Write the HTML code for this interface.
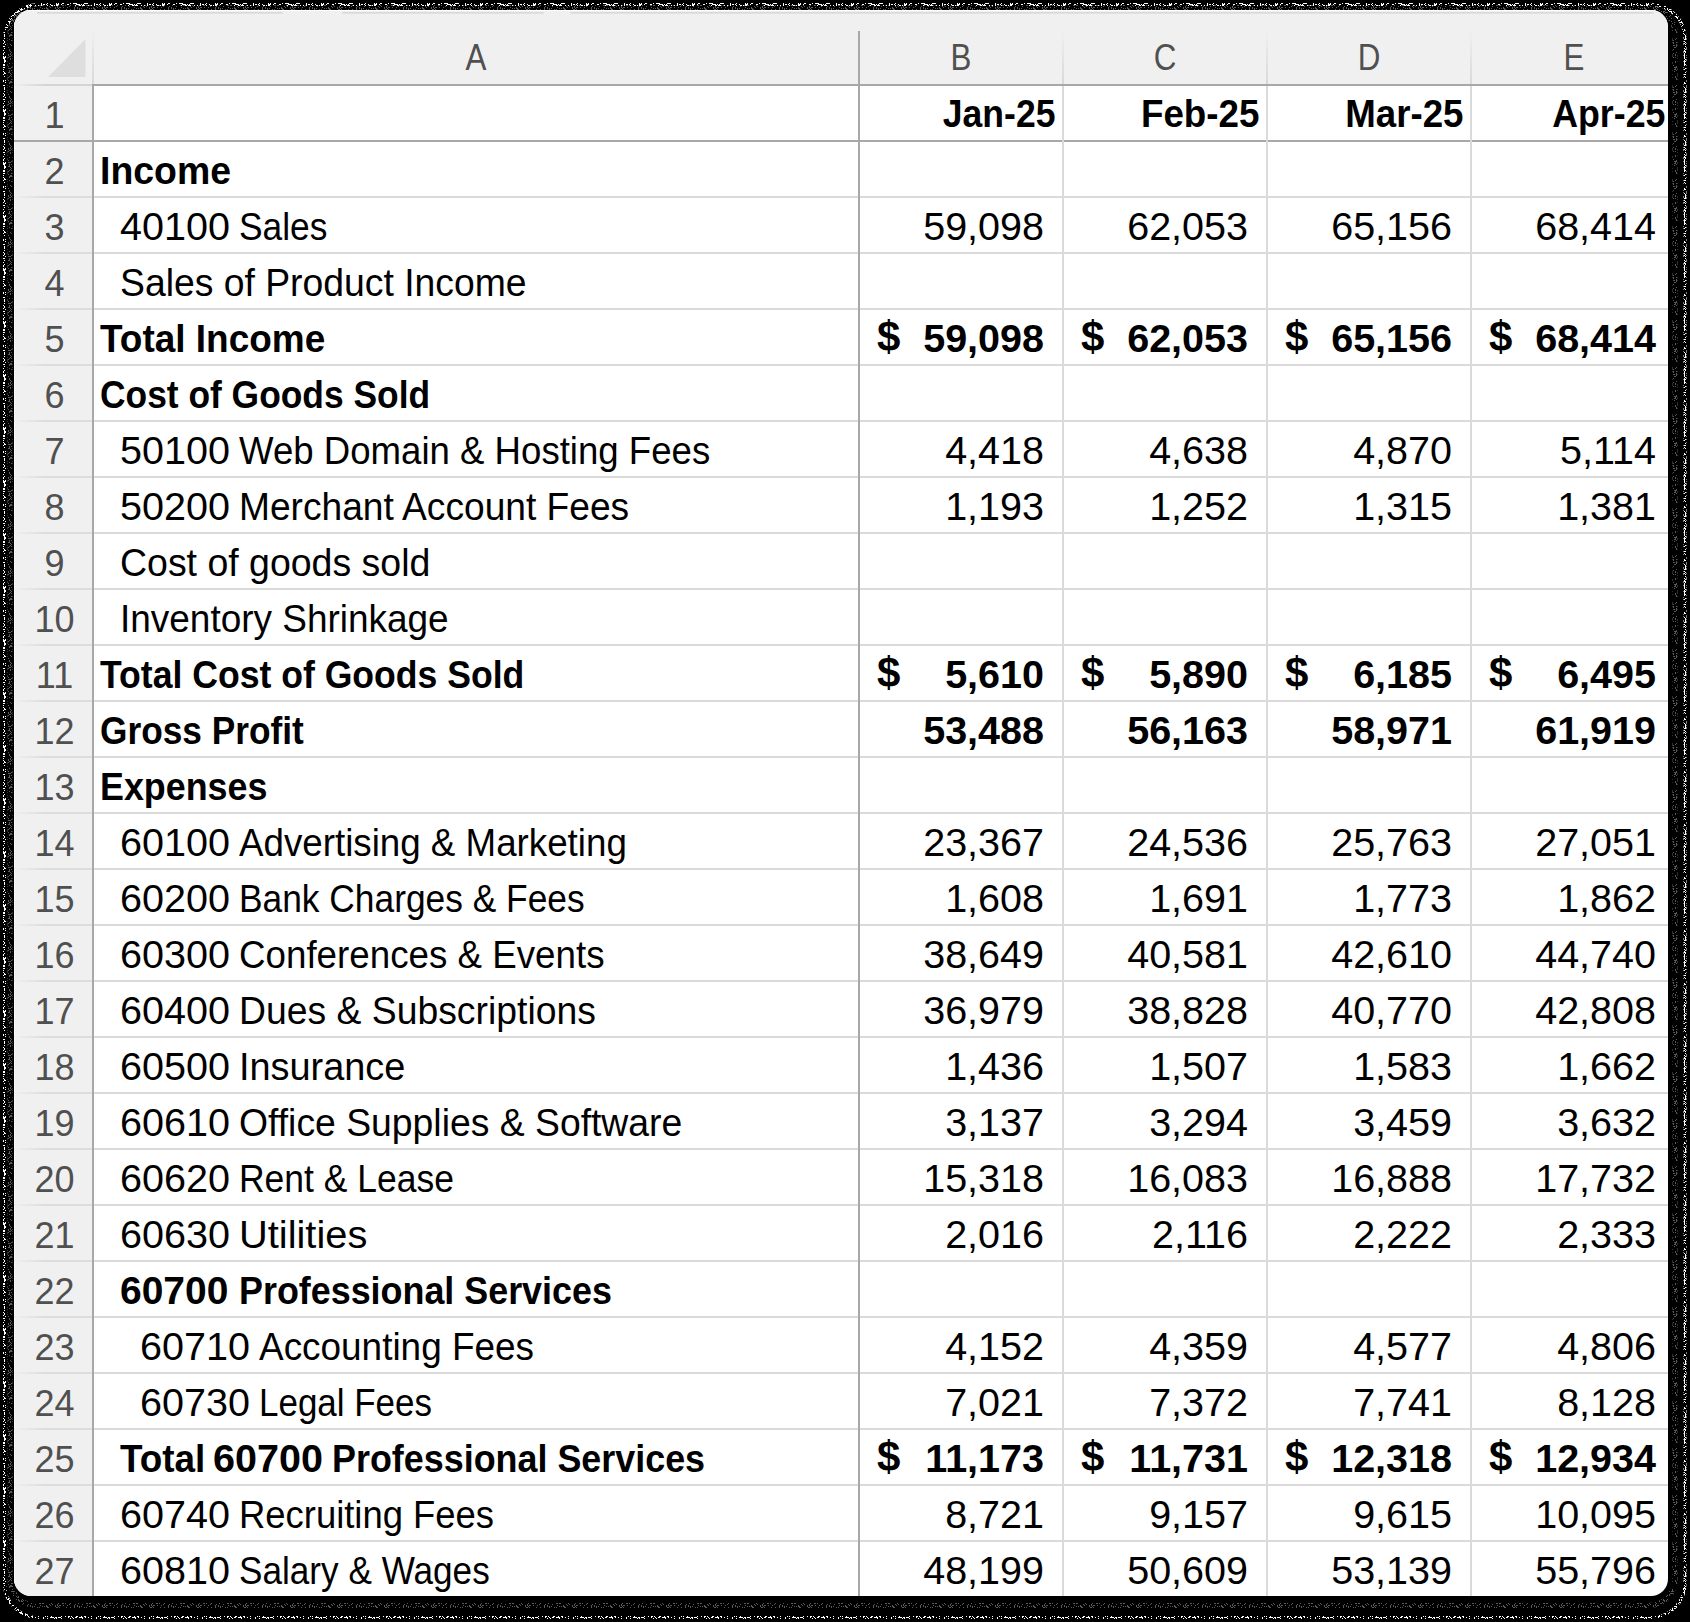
<!DOCTYPE html>
<html><head><meta charset="utf-8"><style>
html,body{margin:0;padding:0;}
body{width:1690px;height:1622px;background:#000;overflow:hidden;position:relative;font-family:"Liberation Sans",sans-serif;}
.card{position:absolute;left:14px;top:10px;width:1654px;height:1586px;border-radius:17px;overflow:hidden;background:#fff;}
.a{position:absolute;white-space:nowrap;}
.hl{position:absolute;height:2px;}
.vl{position:absolute;width:2px;}
.t{position:absolute;white-space:nowrap;height:56px;line-height:56px;font-size:38px;color:#000;}
.lr{transform:scaleX(0.983);transform-origin:0 0;}
.lb{transform:scaleX(0.933);transform-origin:0 0;}
.hd{transform:scaleX(0.935);transform-origin:100% 0;}
.n{font-size:39.5px;}
.b{font-weight:bold;}
.rn{position:absolute;white-space:nowrap;height:56px;line-height:56px;font-size:36px;color:#505050;text-align:center;width:78px;left:1.5px;margin-top:2px;}
.ch{position:absolute;white-space:nowrap;top:10.5px;height:74px;line-height:74px;font-size:36px;color:#505050;text-align:center;}
</style></head><body><svg style="position:absolute;left:0;top:0" width="1690" height="1622"><defs><pattern id="nz" width="53" height="53" patternUnits="userSpaceOnUse"><path d="M0 0h1v1h-1zM1 0h1v1h-1zM3 0h1v1h-1zM6 0h1v1h-1zM8 0h1v1h-1zM10 0h1v1h-1zM11 0h1v1h-1zM14 0h1v1h-1zM15 0h1v1h-1zM21 0h1v1h-1zM23 0h1v1h-1zM24 0h1v1h-1zM25 0h1v1h-1zM26 0h1v1h-1zM28 0h1v1h-1zM33 0h1v1h-1zM34 0h1v1h-1zM35 0h1v1h-1zM38 0h1v1h-1zM41 0h1v1h-1zM44 0h1v1h-1zM49 0h1v1h-1zM51 0h1v1h-1zM1 1h1v1h-1zM3 1h1v1h-1zM8 1h1v1h-1zM17 1h1v1h-1zM22 1h1v1h-1zM25 1h1v1h-1zM27 1h1v1h-1zM28 1h1v1h-1zM29 1h1v1h-1zM31 1h1v1h-1zM32 1h1v1h-1zM35 1h1v1h-1zM41 1h1v1h-1zM46 1h1v1h-1zM47 1h1v1h-1zM48 1h1v1h-1zM49 1h1v1h-1zM52 1h1v1h-1zM0 2h1v1h-1zM9 2h1v1h-1zM16 2h1v1h-1zM18 2h1v1h-1zM19 2h1v1h-1zM20 2h1v1h-1zM21 2h1v1h-1zM23 2h1v1h-1zM24 2h1v1h-1zM25 2h1v1h-1zM26 2h1v1h-1zM28 2h1v1h-1zM31 2h1v1h-1zM32 2h1v1h-1zM35 2h1v1h-1zM40 2h1v1h-1zM41 2h1v1h-1zM43 2h1v1h-1zM45 2h1v1h-1zM46 2h1v1h-1zM49 2h1v1h-1zM51 2h1v1h-1zM3 3h1v1h-1zM5 3h1v1h-1zM9 3h1v1h-1zM10 3h1v1h-1zM17 3h1v1h-1zM20 3h1v1h-1zM21 3h1v1h-1zM22 3h1v1h-1zM23 3h1v1h-1zM31 3h1v1h-1zM32 3h1v1h-1zM33 3h1v1h-1zM34 3h1v1h-1zM41 3h1v1h-1zM47 3h1v1h-1zM3 4h1v1h-1zM4 4h1v1h-1zM5 4h1v1h-1zM8 4h1v1h-1zM14 4h1v1h-1zM15 4h1v1h-1zM23 4h1v1h-1zM24 4h1v1h-1zM25 4h1v1h-1zM26 4h1v1h-1zM28 4h1v1h-1zM30 4h1v1h-1zM41 4h1v1h-1zM43 4h1v1h-1zM44 4h1v1h-1zM46 4h1v1h-1zM50 4h1v1h-1zM1 5h1v1h-1zM3 5h1v1h-1zM4 5h1v1h-1zM22 5h1v1h-1zM26 5h1v1h-1zM27 5h1v1h-1zM29 5h1v1h-1zM30 5h1v1h-1zM31 5h1v1h-1zM35 5h1v1h-1zM38 5h1v1h-1zM41 5h1v1h-1zM47 5h1v1h-1zM51 5h1v1h-1zM52 5h1v1h-1zM1 6h1v1h-1zM4 6h1v1h-1zM8 6h1v1h-1zM12 6h1v1h-1zM13 6h1v1h-1zM14 6h1v1h-1zM16 6h1v1h-1zM17 6h1v1h-1zM21 6h1v1h-1zM22 6h1v1h-1zM26 6h1v1h-1zM27 6h1v1h-1zM30 6h1v1h-1zM34 6h1v1h-1zM36 6h1v1h-1zM42 6h1v1h-1zM43 6h1v1h-1zM45 6h1v1h-1zM46 6h1v1h-1zM47 6h1v1h-1zM48 6h1v1h-1zM49 6h1v1h-1zM50 6h1v1h-1zM51 6h1v1h-1zM0 7h1v1h-1zM2 7h1v1h-1zM4 7h1v1h-1zM5 7h1v1h-1zM6 7h1v1h-1zM9 7h1v1h-1zM12 7h1v1h-1zM27 7h1v1h-1zM28 7h1v1h-1zM29 7h1v1h-1zM31 7h1v1h-1zM32 7h1v1h-1zM33 7h1v1h-1zM37 7h1v1h-1zM38 7h1v1h-1zM39 7h1v1h-1zM41 7h1v1h-1zM43 7h1v1h-1zM47 7h1v1h-1zM49 7h1v1h-1zM51 7h1v1h-1zM2 8h1v1h-1zM4 8h1v1h-1zM5 8h1v1h-1zM6 8h1v1h-1zM8 8h1v1h-1zM9 8h1v1h-1zM10 8h1v1h-1zM11 8h1v1h-1zM19 8h1v1h-1zM21 8h1v1h-1zM24 8h1v1h-1zM30 8h1v1h-1zM40 8h1v1h-1zM41 8h1v1h-1zM42 8h1v1h-1zM44 8h1v1h-1zM51 8h1v1h-1zM4 9h1v1h-1zM6 9h1v1h-1zM7 9h1v1h-1zM8 9h1v1h-1zM10 9h1v1h-1zM20 9h1v1h-1zM21 9h1v1h-1zM22 9h1v1h-1zM24 9h1v1h-1zM26 9h1v1h-1zM27 9h1v1h-1zM28 9h1v1h-1zM32 9h1v1h-1zM36 9h1v1h-1zM38 9h1v1h-1zM41 9h1v1h-1zM46 9h1v1h-1zM47 9h1v1h-1zM49 9h1v1h-1zM51 9h1v1h-1zM1 10h1v1h-1zM6 10h1v1h-1zM9 10h1v1h-1zM10 10h1v1h-1zM13 10h1v1h-1zM14 10h1v1h-1zM16 10h1v1h-1zM18 10h1v1h-1zM21 10h1v1h-1zM25 10h1v1h-1zM32 10h1v1h-1zM33 10h1v1h-1zM34 10h1v1h-1zM36 10h1v1h-1zM38 10h1v1h-1zM39 10h1v1h-1zM41 10h1v1h-1zM51 10h1v1h-1zM3 11h1v1h-1zM4 11h1v1h-1zM6 11h1v1h-1zM9 11h1v1h-1zM12 11h1v1h-1zM14 11h1v1h-1zM17 11h1v1h-1zM18 11h1v1h-1zM19 11h1v1h-1zM22 11h1v1h-1zM26 11h1v1h-1zM27 11h1v1h-1zM28 11h1v1h-1zM30 11h1v1h-1zM31 11h1v1h-1zM32 11h1v1h-1zM41 11h1v1h-1zM42 11h1v1h-1zM44 11h1v1h-1zM48 11h1v1h-1zM49 11h1v1h-1zM50 11h1v1h-1zM3 12h1v1h-1zM4 12h1v1h-1zM9 12h1v1h-1zM15 12h1v1h-1zM16 12h1v1h-1zM17 12h1v1h-1zM26 12h1v1h-1zM28 12h1v1h-1zM31 12h1v1h-1zM32 12h1v1h-1zM33 12h1v1h-1zM36 12h1v1h-1zM37 12h1v1h-1zM41 12h1v1h-1zM43 12h1v1h-1zM44 12h1v1h-1zM50 12h1v1h-1zM51 12h1v1h-1zM1 13h1v1h-1zM2 13h1v1h-1zM6 13h1v1h-1zM9 13h1v1h-1zM10 13h1v1h-1zM14 13h1v1h-1zM18 13h1v1h-1zM20 13h1v1h-1zM22 13h1v1h-1zM23 13h1v1h-1zM25 13h1v1h-1zM28 13h1v1h-1zM29 13h1v1h-1zM33 13h1v1h-1zM35 13h1v1h-1zM37 13h1v1h-1zM38 13h1v1h-1zM39 13h1v1h-1zM46 13h1v1h-1zM47 13h1v1h-1zM50 13h1v1h-1zM2 14h1v1h-1zM3 14h1v1h-1zM4 14h1v1h-1zM7 14h1v1h-1zM9 14h1v1h-1zM14 14h1v1h-1zM18 14h1v1h-1zM21 14h1v1h-1zM25 14h1v1h-1zM26 14h1v1h-1zM27 14h1v1h-1zM29 14h1v1h-1zM33 14h1v1h-1zM36 14h1v1h-1zM38 14h1v1h-1zM39 14h1v1h-1zM40 14h1v1h-1zM45 14h1v1h-1zM46 14h1v1h-1zM51 14h1v1h-1zM2 15h1v1h-1zM8 15h1v1h-1zM9 15h1v1h-1zM12 15h1v1h-1zM13 15h1v1h-1zM15 15h1v1h-1zM16 15h1v1h-1zM17 15h1v1h-1zM19 15h1v1h-1zM23 15h1v1h-1zM24 15h1v1h-1zM25 15h1v1h-1zM29 15h1v1h-1zM36 15h1v1h-1zM38 15h1v1h-1zM42 15h1v1h-1zM43 15h1v1h-1zM44 15h1v1h-1zM45 15h1v1h-1zM48 15h1v1h-1zM52 15h1v1h-1zM3 16h1v1h-1zM8 16h1v1h-1zM9 16h1v1h-1zM10 16h1v1h-1zM11 16h1v1h-1zM18 16h1v1h-1zM21 16h1v1h-1zM24 16h1v1h-1zM26 16h1v1h-1zM27 16h1v1h-1zM28 16h1v1h-1zM31 16h1v1h-1zM32 16h1v1h-1zM33 16h1v1h-1zM35 16h1v1h-1zM36 16h1v1h-1zM37 16h1v1h-1zM40 16h1v1h-1zM41 16h1v1h-1zM45 16h1v1h-1zM46 16h1v1h-1zM49 16h1v1h-1zM50 16h1v1h-1zM52 16h1v1h-1zM6 17h1v1h-1zM8 17h1v1h-1zM9 17h1v1h-1zM16 17h1v1h-1zM17 17h1v1h-1zM21 17h1v1h-1zM25 17h1v1h-1zM26 17h1v1h-1zM29 17h1v1h-1zM33 17h1v1h-1zM34 17h1v1h-1zM38 17h1v1h-1zM44 17h1v1h-1zM46 17h1v1h-1zM50 17h1v1h-1zM51 17h1v1h-1zM2 18h1v1h-1zM3 18h1v1h-1zM6 18h1v1h-1zM9 18h1v1h-1zM11 18h1v1h-1zM15 18h1v1h-1zM22 18h1v1h-1zM25 18h1v1h-1zM29 18h1v1h-1zM31 18h1v1h-1zM32 18h1v1h-1zM34 18h1v1h-1zM37 18h1v1h-1zM39 18h1v1h-1zM43 18h1v1h-1zM47 18h1v1h-1zM52 18h1v1h-1zM4 19h1v1h-1zM7 19h1v1h-1zM10 19h1v1h-1zM12 19h1v1h-1zM14 19h1v1h-1zM17 19h1v1h-1zM18 19h1v1h-1zM20 19h1v1h-1zM21 19h1v1h-1zM22 19h1v1h-1zM23 19h1v1h-1zM27 19h1v1h-1zM29 19h1v1h-1zM37 19h1v1h-1zM42 19h1v1h-1zM48 19h1v1h-1zM50 19h1v1h-1zM52 19h1v1h-1zM4 20h1v1h-1zM5 20h1v1h-1zM6 20h1v1h-1zM7 20h1v1h-1zM12 20h1v1h-1zM13 20h1v1h-1zM15 20h1v1h-1zM16 20h1v1h-1zM18 20h1v1h-1zM20 20h1v1h-1zM23 20h1v1h-1zM26 20h1v1h-1zM28 20h1v1h-1zM29 20h1v1h-1zM30 20h1v1h-1zM35 20h1v1h-1zM36 20h1v1h-1zM44 20h1v1h-1zM46 20h1v1h-1zM49 20h1v1h-1zM50 20h1v1h-1zM52 20h1v1h-1zM2 21h1v1h-1zM3 21h1v1h-1zM8 21h1v1h-1zM9 21h1v1h-1zM10 21h1v1h-1zM11 21h1v1h-1zM15 21h1v1h-1zM21 21h1v1h-1zM22 21h1v1h-1zM23 21h1v1h-1zM24 21h1v1h-1zM30 21h1v1h-1zM35 21h1v1h-1zM38 21h1v1h-1zM40 21h1v1h-1zM41 21h1v1h-1zM42 21h1v1h-1zM46 21h1v1h-1zM48 21h1v1h-1zM49 21h1v1h-1zM9 22h1v1h-1zM10 22h1v1h-1zM12 22h1v1h-1zM14 22h1v1h-1zM15 22h1v1h-1zM16 22h1v1h-1zM19 22h1v1h-1zM20 22h1v1h-1zM21 22h1v1h-1zM26 22h1v1h-1zM32 22h1v1h-1zM36 22h1v1h-1zM37 22h1v1h-1zM38 22h1v1h-1zM39 22h1v1h-1zM45 22h1v1h-1zM46 22h1v1h-1zM47 22h1v1h-1zM49 22h1v1h-1zM50 22h1v1h-1zM52 22h1v1h-1zM0 23h1v1h-1zM1 23h1v1h-1zM4 23h1v1h-1zM9 23h1v1h-1zM16 23h1v1h-1zM18 23h1v1h-1zM20 23h1v1h-1zM21 23h1v1h-1zM22 23h1v1h-1zM25 23h1v1h-1zM29 23h1v1h-1zM33 23h1v1h-1zM35 23h1v1h-1zM36 23h1v1h-1zM39 23h1v1h-1zM41 23h1v1h-1zM50 23h1v1h-1zM52 23h1v1h-1zM0 24h1v1h-1zM1 24h1v1h-1zM6 24h1v1h-1zM13 24h1v1h-1zM14 24h1v1h-1zM18 24h1v1h-1zM22 24h1v1h-1zM25 24h1v1h-1zM26 24h1v1h-1zM27 24h1v1h-1zM30 24h1v1h-1zM31 24h1v1h-1zM32 24h1v1h-1zM33 24h1v1h-1zM35 24h1v1h-1zM36 24h1v1h-1zM37 24h1v1h-1zM40 24h1v1h-1zM42 24h1v1h-1zM48 24h1v1h-1zM50 24h1v1h-1zM51 24h1v1h-1zM0 25h1v1h-1zM7 25h1v1h-1zM16 25h1v1h-1zM25 25h1v1h-1zM27 25h1v1h-1zM32 25h1v1h-1zM39 25h1v1h-1zM45 25h1v1h-1zM47 25h1v1h-1zM51 25h1v1h-1zM8 26h1v1h-1zM12 26h1v1h-1zM15 26h1v1h-1zM16 26h1v1h-1zM18 26h1v1h-1zM23 26h1v1h-1zM24 26h1v1h-1zM28 26h1v1h-1zM31 26h1v1h-1zM32 26h1v1h-1zM38 26h1v1h-1zM45 26h1v1h-1zM47 26h1v1h-1zM51 26h1v1h-1zM0 27h1v1h-1zM2 27h1v1h-1zM3 27h1v1h-1zM5 27h1v1h-1zM6 27h1v1h-1zM7 27h1v1h-1zM15 27h1v1h-1zM19 27h1v1h-1zM22 27h1v1h-1zM23 27h1v1h-1zM26 27h1v1h-1zM27 27h1v1h-1zM28 27h1v1h-1zM29 27h1v1h-1zM32 27h1v1h-1zM35 27h1v1h-1zM43 27h1v1h-1zM50 27h1v1h-1zM51 27h1v1h-1zM52 27h1v1h-1zM1 28h1v1h-1zM3 28h1v1h-1zM8 28h1v1h-1zM17 28h1v1h-1zM20 28h1v1h-1zM29 28h1v1h-1zM38 28h1v1h-1zM43 28h1v1h-1zM47 28h1v1h-1zM0 29h1v1h-1zM1 29h1v1h-1zM5 29h1v1h-1zM9 29h1v1h-1zM10 29h1v1h-1zM11 29h1v1h-1zM12 29h1v1h-1zM24 29h1v1h-1zM28 29h1v1h-1zM29 29h1v1h-1zM30 29h1v1h-1zM38 29h1v1h-1zM39 29h1v1h-1zM41 29h1v1h-1zM45 29h1v1h-1zM47 29h1v1h-1zM48 29h1v1h-1zM0 30h1v1h-1zM7 30h1v1h-1zM9 30h1v1h-1zM10 30h1v1h-1zM11 30h1v1h-1zM12 30h1v1h-1zM14 30h1v1h-1zM16 30h1v1h-1zM18 30h1v1h-1zM19 30h1v1h-1zM21 30h1v1h-1zM23 30h1v1h-1zM24 30h1v1h-1zM29 30h1v1h-1zM34 30h1v1h-1zM37 30h1v1h-1zM38 30h1v1h-1zM41 30h1v1h-1zM42 30h1v1h-1zM44 30h1v1h-1zM47 30h1v1h-1zM52 30h1v1h-1zM10 31h1v1h-1zM11 31h1v1h-1zM20 31h1v1h-1zM28 31h1v1h-1zM29 31h1v1h-1zM30 31h1v1h-1zM35 31h1v1h-1zM40 31h1v1h-1zM46 31h1v1h-1zM49 31h1v1h-1zM52 31h1v1h-1zM3 32h1v1h-1zM4 32h1v1h-1zM8 32h1v1h-1zM11 32h1v1h-1zM18 32h1v1h-1zM19 32h1v1h-1zM20 32h1v1h-1zM26 32h1v1h-1zM27 32h1v1h-1zM30 32h1v1h-1zM33 32h1v1h-1zM37 32h1v1h-1zM38 32h1v1h-1zM43 32h1v1h-1zM50 32h1v1h-1zM51 32h1v1h-1zM52 32h1v1h-1zM0 33h1v1h-1zM1 33h1v1h-1zM2 33h1v1h-1zM8 33h1v1h-1zM11 33h1v1h-1zM13 33h1v1h-1zM20 33h1v1h-1zM23 33h1v1h-1zM24 33h1v1h-1zM25 33h1v1h-1zM30 33h1v1h-1zM35 33h1v1h-1zM36 33h1v1h-1zM40 33h1v1h-1zM43 33h1v1h-1zM44 33h1v1h-1zM45 33h1v1h-1zM46 33h1v1h-1zM48 33h1v1h-1zM49 33h1v1h-1zM50 33h1v1h-1zM52 33h1v1h-1zM1 34h1v1h-1zM2 34h1v1h-1zM4 34h1v1h-1zM8 34h1v1h-1zM10 34h1v1h-1zM19 34h1v1h-1zM20 34h1v1h-1zM21 34h1v1h-1zM24 34h1v1h-1zM26 34h1v1h-1zM28 34h1v1h-1zM29 34h1v1h-1zM32 34h1v1h-1zM34 34h1v1h-1zM36 34h1v1h-1zM38 34h1v1h-1zM41 34h1v1h-1zM43 34h1v1h-1zM44 34h1v1h-1zM45 34h1v1h-1zM50 34h1v1h-1zM51 34h1v1h-1zM0 35h1v1h-1zM2 35h1v1h-1zM4 35h1v1h-1zM7 35h1v1h-1zM8 35h1v1h-1zM11 35h1v1h-1zM14 35h1v1h-1zM16 35h1v1h-1zM17 35h1v1h-1zM20 35h1v1h-1zM21 35h1v1h-1zM22 35h1v1h-1zM25 35h1v1h-1zM26 35h1v1h-1zM31 35h1v1h-1zM32 35h1v1h-1zM36 35h1v1h-1zM42 35h1v1h-1zM46 35h1v1h-1zM47 35h1v1h-1zM50 35h1v1h-1zM0 36h1v1h-1zM4 36h1v1h-1zM8 36h1v1h-1zM12 36h1v1h-1zM19 36h1v1h-1zM21 36h1v1h-1zM22 36h1v1h-1zM23 36h1v1h-1zM24 36h1v1h-1zM26 36h1v1h-1zM27 36h1v1h-1zM29 36h1v1h-1zM30 36h1v1h-1zM35 36h1v1h-1zM38 36h1v1h-1zM39 36h1v1h-1zM42 36h1v1h-1zM43 36h1v1h-1zM45 36h1v1h-1zM48 36h1v1h-1zM51 36h1v1h-1zM9 37h1v1h-1zM17 37h1v1h-1zM21 37h1v1h-1zM26 37h1v1h-1zM29 37h1v1h-1zM30 37h1v1h-1zM38 37h1v1h-1zM40 37h1v1h-1zM42 37h1v1h-1zM46 37h1v1h-1zM50 37h1v1h-1zM51 37h1v1h-1zM0 38h1v1h-1zM4 38h1v1h-1zM7 38h1v1h-1zM8 38h1v1h-1zM9 38h1v1h-1zM10 38h1v1h-1zM12 38h1v1h-1zM13 38h1v1h-1zM14 38h1v1h-1zM20 38h1v1h-1zM26 38h1v1h-1zM27 38h1v1h-1zM28 38h1v1h-1zM32 38h1v1h-1zM35 38h1v1h-1zM38 38h1v1h-1zM40 38h1v1h-1zM42 38h1v1h-1zM43 38h1v1h-1zM46 38h1v1h-1zM50 38h1v1h-1zM51 38h1v1h-1zM1 39h1v1h-1zM16 39h1v1h-1zM18 39h1v1h-1zM32 39h1v1h-1zM36 39h1v1h-1zM41 39h1v1h-1zM42 39h1v1h-1zM43 39h1v1h-1zM46 39h1v1h-1zM48 39h1v1h-1zM52 39h1v1h-1zM2 40h1v1h-1zM3 40h1v1h-1zM20 40h1v1h-1zM34 40h1v1h-1zM35 40h1v1h-1zM39 40h1v1h-1zM46 40h1v1h-1zM47 40h1v1h-1zM50 40h1v1h-1zM51 40h1v1h-1zM4 41h1v1h-1zM7 41h1v1h-1zM9 41h1v1h-1zM10 41h1v1h-1zM14 41h1v1h-1zM17 41h1v1h-1zM23 41h1v1h-1zM24 41h1v1h-1zM26 41h1v1h-1zM27 41h1v1h-1zM28 41h1v1h-1zM33 41h1v1h-1zM34 41h1v1h-1zM36 41h1v1h-1zM39 41h1v1h-1zM40 41h1v1h-1zM41 41h1v1h-1zM47 41h1v1h-1zM0 42h1v1h-1zM1 42h1v1h-1zM4 42h1v1h-1zM7 42h1v1h-1zM12 42h1v1h-1zM15 42h1v1h-1zM16 42h1v1h-1zM20 42h1v1h-1zM21 42h1v1h-1zM23 42h1v1h-1zM25 42h1v1h-1zM27 42h1v1h-1zM31 42h1v1h-1zM32 42h1v1h-1zM35 42h1v1h-1zM36 42h1v1h-1zM37 42h1v1h-1zM38 42h1v1h-1zM39 42h1v1h-1zM42 42h1v1h-1zM44 42h1v1h-1zM45 42h1v1h-1zM47 42h1v1h-1zM51 42h1v1h-1zM3 43h1v1h-1zM6 43h1v1h-1zM8 43h1v1h-1zM10 43h1v1h-1zM14 43h1v1h-1zM16 43h1v1h-1zM18 43h1v1h-1zM21 43h1v1h-1zM26 43h1v1h-1zM28 43h1v1h-1zM29 43h1v1h-1zM31 43h1v1h-1zM33 43h1v1h-1zM37 43h1v1h-1zM38 43h1v1h-1zM39 43h1v1h-1zM40 43h1v1h-1zM41 43h1v1h-1zM43 43h1v1h-1zM49 43h1v1h-1zM50 43h1v1h-1zM51 43h1v1h-1zM5 44h1v1h-1zM9 44h1v1h-1zM10 44h1v1h-1zM14 44h1v1h-1zM15 44h1v1h-1zM16 44h1v1h-1zM17 44h1v1h-1zM18 44h1v1h-1zM20 44h1v1h-1zM21 44h1v1h-1zM23 44h1v1h-1zM27 44h1v1h-1zM31 44h1v1h-1zM34 44h1v1h-1zM35 44h1v1h-1zM38 44h1v1h-1zM39 44h1v1h-1zM40 44h1v1h-1zM42 44h1v1h-1zM45 44h1v1h-1zM50 44h1v1h-1zM51 44h1v1h-1zM7 45h1v1h-1zM12 45h1v1h-1zM14 45h1v1h-1zM17 45h1v1h-1zM22 45h1v1h-1zM23 45h1v1h-1zM26 45h1v1h-1zM27 45h1v1h-1zM28 45h1v1h-1zM31 45h1v1h-1zM32 45h1v1h-1zM37 45h1v1h-1zM39 45h1v1h-1zM45 45h1v1h-1zM51 45h1v1h-1zM52 45h1v1h-1zM1 46h1v1h-1zM2 46h1v1h-1zM3 46h1v1h-1zM4 46h1v1h-1zM7 46h1v1h-1zM8 46h1v1h-1zM11 46h1v1h-1zM12 46h1v1h-1zM13 46h1v1h-1zM16 46h1v1h-1zM20 46h1v1h-1zM23 46h1v1h-1zM25 46h1v1h-1zM31 46h1v1h-1zM32 46h1v1h-1zM33 46h1v1h-1zM34 46h1v1h-1zM37 46h1v1h-1zM38 46h1v1h-1zM42 46h1v1h-1zM46 46h1v1h-1zM47 46h1v1h-1zM49 46h1v1h-1zM1 47h1v1h-1zM2 47h1v1h-1zM11 47h1v1h-1zM12 47h1v1h-1zM14 47h1v1h-1zM16 47h1v1h-1zM19 47h1v1h-1zM20 47h1v1h-1zM22 47h1v1h-1zM24 47h1v1h-1zM29 47h1v1h-1zM38 47h1v1h-1zM39 47h1v1h-1zM43 47h1v1h-1zM44 47h1v1h-1zM45 47h1v1h-1zM1 48h1v1h-1zM4 48h1v1h-1zM9 48h1v1h-1zM12 48h1v1h-1zM13 48h1v1h-1zM16 48h1v1h-1zM24 48h1v1h-1zM25 48h1v1h-1zM28 48h1v1h-1zM30 48h1v1h-1zM31 48h1v1h-1zM33 48h1v1h-1zM36 48h1v1h-1zM38 48h1v1h-1zM41 48h1v1h-1zM43 48h1v1h-1zM49 48h1v1h-1zM52 48h1v1h-1zM2 49h1v1h-1zM6 49h1v1h-1zM8 49h1v1h-1zM9 49h1v1h-1zM11 49h1v1h-1zM13 49h1v1h-1zM14 49h1v1h-1zM23 49h1v1h-1zM29 49h1v1h-1zM34 49h1v1h-1zM36 49h1v1h-1zM39 49h1v1h-1zM42 49h1v1h-1zM43 49h1v1h-1zM47 49h1v1h-1zM48 49h1v1h-1zM49 49h1v1h-1zM51 49h1v1h-1zM0 50h1v1h-1zM3 50h1v1h-1zM9 50h1v1h-1zM11 50h1v1h-1zM15 50h1v1h-1zM16 50h1v1h-1zM21 50h1v1h-1zM26 50h1v1h-1zM27 50h1v1h-1zM28 50h1v1h-1zM31 50h1v1h-1zM32 50h1v1h-1zM38 50h1v1h-1zM41 50h1v1h-1zM44 50h1v1h-1zM45 50h1v1h-1zM47 50h1v1h-1zM48 50h1v1h-1zM50 50h1v1h-1zM2 51h1v1h-1zM10 51h1v1h-1zM15 51h1v1h-1zM23 51h1v1h-1zM25 51h1v1h-1zM29 51h1v1h-1zM30 51h1v1h-1zM32 51h1v1h-1zM33 51h1v1h-1zM38 51h1v1h-1zM39 51h1v1h-1zM40 51h1v1h-1zM41 51h1v1h-1zM42 51h1v1h-1zM49 51h1v1h-1zM50 51h1v1h-1zM4 52h1v1h-1zM7 52h1v1h-1zM8 52h1v1h-1zM9 52h1v1h-1zM10 52h1v1h-1zM11 52h1v1h-1zM13 52h1v1h-1zM15 52h1v1h-1zM19 52h1v1h-1zM23 52h1v1h-1zM27 52h1v1h-1zM28 52h1v1h-1zM33 52h1v1h-1zM34 52h1v1h-1zM40 52h1v1h-1zM42 52h1v1h-1zM47 52h1v1h-1zM49 52h1v1h-1z" fill="#fff"/></pattern><pattern id="nz2" width="47" height="47" patternUnits="userSpaceOnUse"><path d="M0 0h1v1h-1zM4 0h1v1h-1zM5 0h1v1h-1zM6 0h1v1h-1zM8 0h1v1h-1zM29 0h1v1h-1zM30 0h1v1h-1zM38 0h1v1h-1zM39 0h1v1h-1zM40 0h1v1h-1zM41 0h1v1h-1zM44 0h1v1h-1zM0 1h1v1h-1zM1 1h1v1h-1zM4 1h1v1h-1zM5 1h1v1h-1zM16 1h1v1h-1zM18 1h1v1h-1zM22 1h1v1h-1zM33 1h1v1h-1zM38 1h1v1h-1zM40 1h1v1h-1zM3 2h1v1h-1zM9 2h1v1h-1zM14 2h1v1h-1zM18 2h1v1h-1zM19 2h1v1h-1zM21 2h1v1h-1zM23 2h1v1h-1zM25 2h1v1h-1zM26 2h1v1h-1zM28 2h1v1h-1zM34 2h1v1h-1zM38 2h1v1h-1zM42 2h1v1h-1zM43 2h1v1h-1zM0 3h1v1h-1zM2 3h1v1h-1zM4 3h1v1h-1zM6 3h1v1h-1zM9 3h1v1h-1zM14 3h1v1h-1zM19 3h1v1h-1zM21 3h1v1h-1zM22 3h1v1h-1zM27 3h1v1h-1zM43 3h1v1h-1zM45 3h1v1h-1zM5 4h1v1h-1zM6 4h1v1h-1zM10 4h1v1h-1zM17 4h1v1h-1zM44 4h1v1h-1zM4 5h1v1h-1zM11 5h1v1h-1zM15 5h1v1h-1zM16 5h1v1h-1zM18 5h1v1h-1zM23 5h1v1h-1zM31 5h1v1h-1zM39 5h1v1h-1zM40 5h1v1h-1zM42 5h1v1h-1zM43 5h1v1h-1zM2 6h1v1h-1zM5 6h1v1h-1zM10 6h1v1h-1zM22 6h1v1h-1zM28 6h1v1h-1zM35 6h1v1h-1zM3 7h1v1h-1zM8 7h1v1h-1zM10 7h1v1h-1zM12 7h1v1h-1zM13 7h1v1h-1zM16 7h1v1h-1zM20 7h1v1h-1zM27 7h1v1h-1zM30 7h1v1h-1zM40 7h1v1h-1zM46 7h1v1h-1zM0 8h1v1h-1zM8 8h1v1h-1zM11 8h1v1h-1zM27 8h1v1h-1zM30 8h1v1h-1zM32 8h1v1h-1zM34 8h1v1h-1zM42 8h1v1h-1zM44 8h1v1h-1zM46 8h1v1h-1zM0 9h1v1h-1zM1 9h1v1h-1zM9 9h1v1h-1zM10 9h1v1h-1zM12 9h1v1h-1zM19 9h1v1h-1zM23 9h1v1h-1zM27 9h1v1h-1zM32 9h1v1h-1zM37 9h1v1h-1zM39 9h1v1h-1zM2 10h1v1h-1zM7 10h1v1h-1zM8 10h1v1h-1zM14 10h1v1h-1zM20 10h1v1h-1zM25 10h1v1h-1zM28 10h1v1h-1zM30 10h1v1h-1zM35 10h1v1h-1zM37 10h1v1h-1zM39 10h1v1h-1zM44 10h1v1h-1zM45 10h1v1h-1zM4 11h1v1h-1zM5 11h1v1h-1zM7 11h1v1h-1zM10 11h1v1h-1zM12 11h1v1h-1zM16 11h1v1h-1zM18 11h1v1h-1zM19 11h1v1h-1zM24 11h1v1h-1zM32 11h1v1h-1zM34 11h1v1h-1zM39 11h1v1h-1zM45 11h1v1h-1zM2 12h1v1h-1zM10 12h1v1h-1zM14 12h1v1h-1zM18 12h1v1h-1zM20 12h1v1h-1zM21 12h1v1h-1zM22 12h1v1h-1zM33 12h1v1h-1zM37 12h1v1h-1zM40 12h1v1h-1zM44 12h1v1h-1zM13 13h1v1h-1zM19 13h1v1h-1zM33 13h1v1h-1zM40 13h1v1h-1zM42 13h1v1h-1zM43 13h1v1h-1zM2 14h1v1h-1zM7 14h1v1h-1zM13 14h1v1h-1zM15 14h1v1h-1zM17 14h1v1h-1zM30 14h1v1h-1zM32 14h1v1h-1zM34 14h1v1h-1zM35 14h1v1h-1zM41 14h1v1h-1zM2 15h1v1h-1zM16 15h1v1h-1zM25 15h1v1h-1zM27 15h1v1h-1zM30 15h1v1h-1zM33 15h1v1h-1zM4 16h1v1h-1zM9 16h1v1h-1zM12 16h1v1h-1zM14 16h1v1h-1zM16 16h1v1h-1zM21 16h1v1h-1zM24 16h1v1h-1zM27 16h1v1h-1zM33 16h1v1h-1zM40 16h1v1h-1zM7 17h1v1h-1zM14 17h1v1h-1zM20 17h1v1h-1zM34 17h1v1h-1zM40 17h1v1h-1zM42 17h1v1h-1zM7 18h1v1h-1zM17 18h1v1h-1zM22 18h1v1h-1zM26 18h1v1h-1zM28 18h1v1h-1zM34 18h1v1h-1zM37 18h1v1h-1zM39 18h1v1h-1zM41 18h1v1h-1zM45 18h1v1h-1zM0 19h1v1h-1zM6 19h1v1h-1zM8 19h1v1h-1zM12 19h1v1h-1zM14 19h1v1h-1zM17 19h1v1h-1zM31 19h1v1h-1zM33 19h1v1h-1zM39 19h1v1h-1zM42 19h1v1h-1zM46 19h1v1h-1zM1 20h1v1h-1zM11 20h1v1h-1zM12 20h1v1h-1zM13 20h1v1h-1zM19 20h1v1h-1zM23 20h1v1h-1zM24 20h1v1h-1zM29 20h1v1h-1zM30 20h1v1h-1zM31 20h1v1h-1zM39 20h1v1h-1zM40 20h1v1h-1zM43 20h1v1h-1zM45 20h1v1h-1zM8 21h1v1h-1zM9 21h1v1h-1zM10 21h1v1h-1zM13 21h1v1h-1zM17 21h1v1h-1zM20 21h1v1h-1zM26 21h1v1h-1zM30 21h1v1h-1zM32 21h1v1h-1zM33 21h1v1h-1zM39 21h1v1h-1zM41 21h1v1h-1zM3 22h1v1h-1zM6 22h1v1h-1zM15 22h1v1h-1zM16 22h1v1h-1zM19 22h1v1h-1zM20 22h1v1h-1zM23 22h1v1h-1zM29 22h1v1h-1zM30 22h1v1h-1zM32 22h1v1h-1zM35 22h1v1h-1zM37 22h1v1h-1zM39 22h1v1h-1zM43 22h1v1h-1zM4 23h1v1h-1zM5 23h1v1h-1zM9 23h1v1h-1zM11 23h1v1h-1zM15 23h1v1h-1zM17 23h1v1h-1zM19 23h1v1h-1zM23 23h1v1h-1zM27 23h1v1h-1zM31 23h1v1h-1zM35 23h1v1h-1zM36 23h1v1h-1zM37 23h1v1h-1zM4 24h1v1h-1zM9 24h1v1h-1zM17 24h1v1h-1zM29 24h1v1h-1zM39 24h1v1h-1zM46 24h1v1h-1zM8 25h1v1h-1zM9 25h1v1h-1zM12 25h1v1h-1zM16 25h1v1h-1zM24 25h1v1h-1zM26 25h1v1h-1zM35 25h1v1h-1zM36 25h1v1h-1zM37 25h1v1h-1zM39 25h1v1h-1zM40 25h1v1h-1zM46 25h1v1h-1zM0 26h1v1h-1zM6 26h1v1h-1zM10 26h1v1h-1zM17 26h1v1h-1zM18 26h1v1h-1zM20 26h1v1h-1zM24 26h1v1h-1zM25 26h1v1h-1zM26 26h1v1h-1zM32 26h1v1h-1zM33 26h1v1h-1zM35 26h1v1h-1zM39 26h1v1h-1zM44 26h1v1h-1zM4 27h1v1h-1zM5 27h1v1h-1zM11 27h1v1h-1zM15 27h1v1h-1zM17 27h1v1h-1zM20 27h1v1h-1zM21 27h1v1h-1zM23 27h1v1h-1zM26 27h1v1h-1zM27 27h1v1h-1zM32 27h1v1h-1zM39 27h1v1h-1zM43 27h1v1h-1zM45 27h1v1h-1zM46 27h1v1h-1zM4 28h1v1h-1zM7 28h1v1h-1zM10 28h1v1h-1zM13 28h1v1h-1zM14 28h1v1h-1zM17 28h1v1h-1zM25 28h1v1h-1zM32 28h1v1h-1zM36 28h1v1h-1zM37 28h1v1h-1zM38 28h1v1h-1zM40 28h1v1h-1zM41 28h1v1h-1zM0 29h1v1h-1zM9 29h1v1h-1zM11 29h1v1h-1zM20 29h1v1h-1zM22 29h1v1h-1zM24 29h1v1h-1zM30 29h1v1h-1zM32 29h1v1h-1zM34 29h1v1h-1zM35 29h1v1h-1zM39 29h1v1h-1zM41 29h1v1h-1zM5 30h1v1h-1zM7 30h1v1h-1zM8 30h1v1h-1zM19 30h1v1h-1zM26 30h1v1h-1zM27 30h1v1h-1zM30 30h1v1h-1zM37 30h1v1h-1zM43 30h1v1h-1zM1 31h1v1h-1zM7 31h1v1h-1zM16 31h1v1h-1zM18 31h1v1h-1zM20 31h1v1h-1zM21 31h1v1h-1zM24 31h1v1h-1zM31 31h1v1h-1zM33 31h1v1h-1zM35 31h1v1h-1zM44 31h1v1h-1zM6 32h1v1h-1zM7 32h1v1h-1zM11 32h1v1h-1zM12 32h1v1h-1zM13 32h1v1h-1zM15 32h1v1h-1zM20 32h1v1h-1zM21 32h1v1h-1zM24 32h1v1h-1zM31 32h1v1h-1zM32 32h1v1h-1zM33 32h1v1h-1zM34 32h1v1h-1zM42 32h1v1h-1zM45 32h1v1h-1zM46 32h1v1h-1zM6 33h1v1h-1zM8 33h1v1h-1zM13 33h1v1h-1zM16 33h1v1h-1zM17 33h1v1h-1zM19 33h1v1h-1zM26 33h1v1h-1zM34 33h1v1h-1zM38 33h1v1h-1zM1 34h1v1h-1zM3 34h1v1h-1zM4 34h1v1h-1zM6 34h1v1h-1zM10 34h1v1h-1zM11 34h1v1h-1zM18 34h1v1h-1zM19 34h1v1h-1zM34 34h1v1h-1zM38 34h1v1h-1zM41 34h1v1h-1zM45 34h1v1h-1zM2 35h1v1h-1zM4 35h1v1h-1zM6 35h1v1h-1zM9 35h1v1h-1zM10 35h1v1h-1zM11 35h1v1h-1zM12 35h1v1h-1zM15 35h1v1h-1zM16 35h1v1h-1zM20 35h1v1h-1zM23 35h1v1h-1zM35 35h1v1h-1zM36 35h1v1h-1zM38 35h1v1h-1zM45 35h1v1h-1zM1 36h1v1h-1zM4 36h1v1h-1zM9 36h1v1h-1zM22 36h1v1h-1zM40 36h1v1h-1zM1 37h1v1h-1zM6 37h1v1h-1zM14 37h1v1h-1zM17 37h1v1h-1zM19 37h1v1h-1zM22 37h1v1h-1zM23 37h1v1h-1zM25 37h1v1h-1zM39 37h1v1h-1zM0 38h1v1h-1zM5 38h1v1h-1zM7 38h1v1h-1zM12 38h1v1h-1zM20 38h1v1h-1zM27 38h1v1h-1zM31 38h1v1h-1zM35 38h1v1h-1zM40 38h1v1h-1zM0 39h1v1h-1zM1 39h1v1h-1zM9 39h1v1h-1zM19 39h1v1h-1zM20 39h1v1h-1zM27 39h1v1h-1zM30 39h1v1h-1zM39 39h1v1h-1zM42 39h1v1h-1zM43 39h1v1h-1zM46 39h1v1h-1zM6 40h1v1h-1zM7 40h1v1h-1zM11 40h1v1h-1zM12 40h1v1h-1zM13 40h1v1h-1zM14 40h1v1h-1zM17 40h1v1h-1zM24 40h1v1h-1zM26 40h1v1h-1zM27 40h1v1h-1zM28 40h1v1h-1zM37 40h1v1h-1zM40 40h1v1h-1zM6 41h1v1h-1zM16 41h1v1h-1zM17 41h1v1h-1zM20 41h1v1h-1zM44 41h1v1h-1zM46 41h1v1h-1zM0 42h1v1h-1zM1 42h1v1h-1zM3 42h1v1h-1zM5 42h1v1h-1zM13 42h1v1h-1zM16 42h1v1h-1zM20 42h1v1h-1zM25 42h1v1h-1zM26 42h1v1h-1zM27 42h1v1h-1zM28 42h1v1h-1zM31 42h1v1h-1zM32 42h1v1h-1zM33 42h1v1h-1zM46 42h1v1h-1zM0 43h1v1h-1zM1 43h1v1h-1zM4 43h1v1h-1zM7 43h1v1h-1zM20 43h1v1h-1zM21 43h1v1h-1zM24 43h1v1h-1zM28 43h1v1h-1zM5 44h1v1h-1zM10 44h1v1h-1zM13 44h1v1h-1zM20 44h1v1h-1zM22 44h1v1h-1zM24 44h1v1h-1zM31 44h1v1h-1zM34 44h1v1h-1zM3 45h1v1h-1zM5 45h1v1h-1zM7 45h1v1h-1zM11 45h1v1h-1zM16 45h1v1h-1zM18 45h1v1h-1zM21 45h1v1h-1zM28 45h1v1h-1zM29 45h1v1h-1zM31 45h1v1h-1zM32 45h1v1h-1zM35 45h1v1h-1zM3 46h1v1h-1zM13 46h1v1h-1zM17 46h1v1h-1zM18 46h1v1h-1zM26 46h1v1h-1zM31 46h1v1h-1zM37 46h1v1h-1zM38 46h1v1h-1zM39 46h1v1h-1z" fill="#5a5a5a"/></pattern></defs><rect x="10" y="7.5" width="1665" height="1598" rx="26" fill="none" stroke="url(#nz2)" stroke-width="5"/><rect x="4.5" y="4.5" width="1680.5" height="1613" rx="34" fill="none" stroke="url(#nz)" stroke-width="3"/></svg><div class="card">

<div class="a" style="left:0;top:0;width:1654px;height:74px;background:#f0f0f0"></div>
<div class="a" style="left:0;top:0;width:78px;height:1586px;background:#f0f0f0"></div>
<div class="a" style="left:0;top:0;width:1654px;height:1px;background:#fff"></div>
<div class="a" style="left:0;top:0;width:1px;height:1586px;background:#fafafa"></div>
<div class="a" style="left:23px;top:2px;width:246px;height:2px;border-radius:1px;background:linear-gradient(180deg,#d6d6d6,#e4e4e4)"></div>
<div class="a" style="left:328px;top:2px;width:202px;height:2px;border-radius:1px;background:linear-gradient(180deg,#d6d6d6,#e4e4e4)"></div>
<div class="a" style="left:556px;top:2px;width:1084px;height:2px;border-radius:1px;background:linear-gradient(180deg,#d6d6d6,#e4e4e4)"></div>
<svg class="a" style="left:33px;top:28px" width="40" height="40"><polygon points="1,39 38.5,39 38.5,1" fill="#dedede"/></svg>
<div class="hl" style="left:78px;top:74px;width:1576px;background:#a8a8a8"></div>
<div class="hl" style="left:0;top:74px;width:78px;background:linear-gradient(90deg,#f0f0f0,#d4d4d4 40%,#d4d4d4)"></div>
<div class="hl" style="left:78px;top:130px;width:1576px;background:#a8a8a8"></div>
<div class="hl" style="left:0;top:130px;width:78px;background:#a8a8a8"></div>
<div class="hl" style="left:80px;top:186px;width:1576px;background:#dadada"></div>
<div class="hl" style="left:0;top:186px;width:78px;background:linear-gradient(90deg,#f0f0f0,#dcdcdc 40%,#dcdcdc)"></div>
<div class="hl" style="left:80px;top:242px;width:1576px;background:#dadada"></div>
<div class="hl" style="left:0;top:242px;width:78px;background:linear-gradient(90deg,#f0f0f0,#dcdcdc 40%,#dcdcdc)"></div>
<div class="hl" style="left:80px;top:298px;width:1576px;background:#dadada"></div>
<div class="hl" style="left:0;top:298px;width:78px;background:linear-gradient(90deg,#f0f0f0,#dcdcdc 40%,#dcdcdc)"></div>
<div class="hl" style="left:80px;top:354px;width:1576px;background:#dadada"></div>
<div class="hl" style="left:0;top:354px;width:78px;background:linear-gradient(90deg,#f0f0f0,#dcdcdc 40%,#dcdcdc)"></div>
<div class="hl" style="left:80px;top:410px;width:1576px;background:#dadada"></div>
<div class="hl" style="left:0;top:410px;width:78px;background:linear-gradient(90deg,#f0f0f0,#dcdcdc 40%,#dcdcdc)"></div>
<div class="hl" style="left:80px;top:466px;width:1576px;background:#dadada"></div>
<div class="hl" style="left:0;top:466px;width:78px;background:linear-gradient(90deg,#f0f0f0,#dcdcdc 40%,#dcdcdc)"></div>
<div class="hl" style="left:80px;top:522px;width:1576px;background:#dadada"></div>
<div class="hl" style="left:0;top:522px;width:78px;background:linear-gradient(90deg,#f0f0f0,#dcdcdc 40%,#dcdcdc)"></div>
<div class="hl" style="left:80px;top:578px;width:1576px;background:#dadada"></div>
<div class="hl" style="left:0;top:578px;width:78px;background:linear-gradient(90deg,#f0f0f0,#dcdcdc 40%,#dcdcdc)"></div>
<div class="hl" style="left:80px;top:634px;width:1576px;background:#dadada"></div>
<div class="hl" style="left:0;top:634px;width:78px;background:linear-gradient(90deg,#f0f0f0,#dcdcdc 40%,#dcdcdc)"></div>
<div class="hl" style="left:80px;top:690px;width:1576px;background:#dadada"></div>
<div class="hl" style="left:0;top:690px;width:78px;background:linear-gradient(90deg,#f0f0f0,#dcdcdc 40%,#dcdcdc)"></div>
<div class="hl" style="left:80px;top:746px;width:1576px;background:#dadada"></div>
<div class="hl" style="left:0;top:746px;width:78px;background:linear-gradient(90deg,#f0f0f0,#dcdcdc 40%,#dcdcdc)"></div>
<div class="hl" style="left:80px;top:802px;width:1576px;background:#dadada"></div>
<div class="hl" style="left:0;top:802px;width:78px;background:linear-gradient(90deg,#f0f0f0,#dcdcdc 40%,#dcdcdc)"></div>
<div class="hl" style="left:80px;top:858px;width:1576px;background:#dadada"></div>
<div class="hl" style="left:0;top:858px;width:78px;background:linear-gradient(90deg,#f0f0f0,#dcdcdc 40%,#dcdcdc)"></div>
<div class="hl" style="left:80px;top:914px;width:1576px;background:#dadada"></div>
<div class="hl" style="left:0;top:914px;width:78px;background:linear-gradient(90deg,#f0f0f0,#dcdcdc 40%,#dcdcdc)"></div>
<div class="hl" style="left:80px;top:970px;width:1576px;background:#dadada"></div>
<div class="hl" style="left:0;top:970px;width:78px;background:linear-gradient(90deg,#f0f0f0,#dcdcdc 40%,#dcdcdc)"></div>
<div class="hl" style="left:80px;top:1026px;width:1576px;background:#dadada"></div>
<div class="hl" style="left:0;top:1026px;width:78px;background:linear-gradient(90deg,#f0f0f0,#dcdcdc 40%,#dcdcdc)"></div>
<div class="hl" style="left:80px;top:1082px;width:1576px;background:#dadada"></div>
<div class="hl" style="left:0;top:1082px;width:78px;background:linear-gradient(90deg,#f0f0f0,#dcdcdc 40%,#dcdcdc)"></div>
<div class="hl" style="left:80px;top:1138px;width:1576px;background:#dadada"></div>
<div class="hl" style="left:0;top:1138px;width:78px;background:linear-gradient(90deg,#f0f0f0,#dcdcdc 40%,#dcdcdc)"></div>
<div class="hl" style="left:80px;top:1194px;width:1576px;background:#dadada"></div>
<div class="hl" style="left:0;top:1194px;width:78px;background:linear-gradient(90deg,#f0f0f0,#dcdcdc 40%,#dcdcdc)"></div>
<div class="hl" style="left:80px;top:1250px;width:1576px;background:#dadada"></div>
<div class="hl" style="left:0;top:1250px;width:78px;background:linear-gradient(90deg,#f0f0f0,#dcdcdc 40%,#dcdcdc)"></div>
<div class="hl" style="left:80px;top:1306px;width:1576px;background:#dadada"></div>
<div class="hl" style="left:0;top:1306px;width:78px;background:linear-gradient(90deg,#f0f0f0,#dcdcdc 40%,#dcdcdc)"></div>
<div class="hl" style="left:80px;top:1362px;width:1576px;background:#dadada"></div>
<div class="hl" style="left:0;top:1362px;width:78px;background:linear-gradient(90deg,#f0f0f0,#dcdcdc 40%,#dcdcdc)"></div>
<div class="hl" style="left:80px;top:1418px;width:1576px;background:#dadada"></div>
<div class="hl" style="left:0;top:1418px;width:78px;background:linear-gradient(90deg,#f0f0f0,#dcdcdc 40%,#dcdcdc)"></div>
<div class="hl" style="left:80px;top:1474px;width:1576px;background:#dadada"></div>
<div class="hl" style="left:0;top:1474px;width:78px;background:linear-gradient(90deg,#f0f0f0,#dcdcdc 40%,#dcdcdc)"></div>
<div class="hl" style="left:80px;top:1530px;width:1576px;background:#dadada"></div>
<div class="hl" style="left:0;top:1530px;width:78px;background:linear-gradient(90deg,#f0f0f0,#dcdcdc 40%,#dcdcdc)"></div>
<div class="vl" style="left:78px;top:74px;height:1512px;background:#a8a8a8"></div>
<div class="vl" style="left:78px;top:20px;height:54px;background:linear-gradient(180deg,#f0f0f0,#d8d8d8)"></div>
<div class="vl" style="left:844px;top:21px;height:1565px;background:#a8a8a8"></div>
<div class="vl" style="left:1048px;top:76px;height:1512px;background:#dadada"></div>
<div class="vl" style="left:1048px;top:20px;height:54px;background:linear-gradient(180deg,#f0f0f0,#d8d8d8)"></div>
<div class="vl" style="left:1252px;top:76px;height:1512px;background:#dadada"></div>
<div class="vl" style="left:1252px;top:20px;height:54px;background:linear-gradient(180deg,#f0f0f0,#d8d8d8)"></div>
<div class="vl" style="left:1456px;top:76px;height:1512px;background:#dadada"></div>
<div class="vl" style="left:1456px;top:20px;height:54px;background:linear-gradient(180deg,#f0f0f0,#d8d8d8)"></div>
<div class="ch" style="left:80px;width:764px"><span style="display:inline-block;transform:scaleX(0.87)">A</span></div>
<div class="ch" style="left:846px;width:202px"><span style="display:inline-block;transform:scaleX(0.87)">B</span></div>
<div class="ch" style="left:1050px;width:202px"><span style="display:inline-block;transform:scaleX(0.87)">C</span></div>
<div class="ch" style="left:1254px;width:202px"><span style="display:inline-block;transform:scaleX(0.87)">D</span></div>
<div class="ch" style="left:1458px;width:205px"><span style="display:inline-block;transform:scaleX(0.87)">E</span></div>
<div class="rn" style="top:76px">1</div>
<div class="t b" style="right:613px;top:76px;transform:scaleX(0.935);transform-origin:100% 0">Jan-25</div>
<div class="t b" style="right:409px;top:76px;transform:scaleX(0.968);transform-origin:100% 0">Feb-25</div>
<div class="t b" style="right:205px;top:76px;transform:scaleX(0.965);transform-origin:100% 0">Mar-25</div>
<div class="t b" style="right:3px;top:76px;transform:scaleX(0.94);transform-origin:100% 0">Apr-25</div>
<div class="rn" style="top:132px">2</div>
<div class="t b" style="left:86px;top:133px;transform:scaleX(0.9848);transform-origin:0 0">Income</div>
<div class="rn" style="top:188px">3</div>
<div class="t" style="left:106px;top:189px;transform:scaleX(1.04);transform-origin:0 0">40100</div>
<div class="t" style="left:225px;top:189px;transform:scaleX(0.9298);transform-origin:0 0">Sales</div>
<div class="t n" style="right:624px;top:188px">59,098</div>
<div class="t n" style="right:420px;top:188px">62,053</div>
<div class="t n" style="right:216px;top:188px">65,156</div>
<div class="t n" style="right:12px;top:188px">68,414</div>
<div class="rn" style="top:244px">4</div>
<div class="t" style="left:106px;top:245px;transform:scaleX(0.9820);transform-origin:0 0">Sales of Product Income</div>
<div class="rn" style="top:300px">5</div>
<div class="t b" style="left:86px;top:301px;transform:scaleX(0.9730);transform-origin:0 0">Total Income</div>
<div class="t b n" style="left:863px;top:299px;font-size:42px">$</div>
<div class="t b n" style="right:624px;top:300px">59,098</div>
<div class="t b n" style="left:1067px;top:299px;font-size:42px">$</div>
<div class="t b n" style="right:420px;top:300px">62,053</div>
<div class="t b n" style="left:1271px;top:299px;font-size:42px">$</div>
<div class="t b n" style="right:216px;top:300px">65,156</div>
<div class="t b n" style="left:1475px;top:299px;font-size:42px">$</div>
<div class="t b n" style="right:12px;top:300px">68,414</div>
<div class="rn" style="top:356px">6</div>
<div class="t b" style="left:86px;top:357px;transform:scaleX(0.9307);transform-origin:0 0">Cost of Goods Sold</div>
<div class="rn" style="top:412px">7</div>
<div class="t" style="left:106px;top:413px;transform:scaleX(1.04);transform-origin:0 0">50100</div>
<div class="t" style="left:225px;top:413px;transform:scaleX(0.9631);transform-origin:0 0">Web Domain &amp; Hosting Fees</div>
<div class="t n" style="right:624px;top:412px">4,418</div>
<div class="t n" style="right:420px;top:412px">4,638</div>
<div class="t n" style="right:216px;top:412px">4,870</div>
<div class="t n" style="right:12px;top:412px">5,114</div>
<div class="rn" style="top:468px">8</div>
<div class="t" style="left:106px;top:469px;transform:scaleX(1.04);transform-origin:0 0">50200</div>
<div class="t" style="left:225px;top:469px;transform:scaleX(0.9774);transform-origin:0 0">Merchant Account Fees</div>
<div class="t n" style="right:624px;top:468px">1,193</div>
<div class="t n" style="right:420px;top:468px">1,252</div>
<div class="t n" style="right:216px;top:468px">1,315</div>
<div class="t n" style="right:12px;top:468px">1,381</div>
<div class="rn" style="top:524px">9</div>
<div class="t" style="left:106px;top:525px;transform:scaleX(0.9859);transform-origin:0 0">Cost of goods sold</div>
<div class="rn" style="top:580px">10</div>
<div class="t" style="left:106px;top:581px;transform:scaleX(0.9723);transform-origin:0 0">Inventory Shrinkage</div>
<div class="rn" style="top:636px">11</div>
<div class="t b" style="left:86px;top:637px;transform:scaleX(0.9364);transform-origin:0 0">Total Cost of Goods Sold</div>
<div class="t b n" style="left:863px;top:635px;font-size:42px">$</div>
<div class="t b n" style="right:624px;top:636px">5,610</div>
<div class="t b n" style="left:1067px;top:635px;font-size:42px">$</div>
<div class="t b n" style="right:420px;top:636px">5,890</div>
<div class="t b n" style="left:1271px;top:635px;font-size:42px">$</div>
<div class="t b n" style="right:216px;top:636px">6,185</div>
<div class="t b n" style="left:1475px;top:635px;font-size:42px">$</div>
<div class="t b n" style="right:12px;top:636px">6,495</div>
<div class="rn" style="top:692px">12</div>
<div class="t b" style="left:86px;top:693px;transform:scaleX(0.9279);transform-origin:0 0">Gross Profit</div>
<div class="t b n" style="right:624px;top:692px">53,488</div>
<div class="t b n" style="right:420px;top:692px">56,163</div>
<div class="t b n" style="right:216px;top:692px">58,971</div>
<div class="t b n" style="right:12px;top:692px">61,919</div>
<div class="rn" style="top:748px">13</div>
<div class="t b" style="left:86px;top:749px;transform:scaleX(0.9432);transform-origin:0 0">Expenses</div>
<div class="rn" style="top:804px">14</div>
<div class="t" style="left:106px;top:805px;transform:scaleX(1.04);transform-origin:0 0">60100</div>
<div class="t" style="left:225px;top:805px;transform:scaleX(0.9664);transform-origin:0 0">Advertising &amp; Marketing</div>
<div class="t n" style="right:624px;top:804px">23,367</div>
<div class="t n" style="right:420px;top:804px">24,536</div>
<div class="t n" style="right:216px;top:804px">25,763</div>
<div class="t n" style="right:12px;top:804px">27,051</div>
<div class="rn" style="top:860px">15</div>
<div class="t" style="left:106px;top:861px;transform:scaleX(1.04);transform-origin:0 0">60200</div>
<div class="t" style="left:225px;top:861px;transform:scaleX(0.9297);transform-origin:0 0">Bank Charges &amp; Fees</div>
<div class="t n" style="right:624px;top:860px">1,608</div>
<div class="t n" style="right:420px;top:860px">1,691</div>
<div class="t n" style="right:216px;top:860px">1,773</div>
<div class="t n" style="right:12px;top:860px">1,862</div>
<div class="rn" style="top:916px">16</div>
<div class="t" style="left:106px;top:917px;transform:scaleX(1.04);transform-origin:0 0">60300</div>
<div class="t" style="left:225px;top:917px;transform:scaleX(0.9668);transform-origin:0 0">Conferences &amp; Events</div>
<div class="t n" style="right:624px;top:916px">38,649</div>
<div class="t n" style="right:420px;top:916px">40,581</div>
<div class="t n" style="right:216px;top:916px">42,610</div>
<div class="t n" style="right:12px;top:916px">44,740</div>
<div class="rn" style="top:972px">17</div>
<div class="t" style="left:106px;top:973px;transform:scaleX(1.04);transform-origin:0 0">60400</div>
<div class="t" style="left:225px;top:973px;transform:scaleX(0.9823);transform-origin:0 0">Dues &amp; Subscriptions</div>
<div class="t n" style="right:624px;top:972px">36,979</div>
<div class="t n" style="right:420px;top:972px">38,828</div>
<div class="t n" style="right:216px;top:972px">40,770</div>
<div class="t n" style="right:12px;top:972px">42,808</div>
<div class="rn" style="top:1028px">18</div>
<div class="t" style="left:106px;top:1029px;transform:scaleX(1.04);transform-origin:0 0">60500</div>
<div class="t" style="left:225px;top:1029px;transform:scaleX(0.9970);transform-origin:0 0">Insurance</div>
<div class="t n" style="right:624px;top:1028px">1,436</div>
<div class="t n" style="right:420px;top:1028px">1,507</div>
<div class="t n" style="right:216px;top:1028px">1,583</div>
<div class="t n" style="right:12px;top:1028px">1,662</div>
<div class="rn" style="top:1084px">19</div>
<div class="t" style="left:106px;top:1085px;transform:scaleX(1.04);transform-origin:0 0">60610</div>
<div class="t" style="left:225px;top:1085px;transform:scaleX(0.9822);transform-origin:0 0">Office Supplies &amp; Software</div>
<div class="t n" style="right:624px;top:1084px">3,137</div>
<div class="t n" style="right:420px;top:1084px">3,294</div>
<div class="t n" style="right:216px;top:1084px">3,459</div>
<div class="t n" style="right:12px;top:1084px">3,632</div>
<div class="rn" style="top:1140px">20</div>
<div class="t" style="left:106px;top:1141px;transform:scaleX(1.04);transform-origin:0 0">60620</div>
<div class="t" style="left:225px;top:1141px;transform:scaleX(0.9332);transform-origin:0 0">Rent &amp; Lease</div>
<div class="t n" style="right:624px;top:1140px">15,318</div>
<div class="t n" style="right:420px;top:1140px">16,083</div>
<div class="t n" style="right:216px;top:1140px">16,888</div>
<div class="t n" style="right:12px;top:1140px">17,732</div>
<div class="rn" style="top:1196px">21</div>
<div class="t" style="left:106px;top:1197px;transform:scaleX(1.04);transform-origin:0 0">60630</div>
<div class="t" style="left:225px;top:1197px;transform:scaleX(1.0479);transform-origin:0 0">Utilities</div>
<div class="t n" style="right:624px;top:1196px">2,016</div>
<div class="t n" style="right:420px;top:1196px">2,116</div>
<div class="t n" style="right:216px;top:1196px">2,222</div>
<div class="t n" style="right:12px;top:1196px">2,333</div>
<div class="rn" style="top:1252px">22</div>
<div class="t b" style="left:106px;top:1253px;transform:scaleX(1.025);transform-origin:0 0">60700</div>
<div class="t b" style="left:225px;top:1253px;transform:scaleX(0.9440);transform-origin:0 0">Professional Services</div>
<div class="rn" style="top:1308px">23</div>
<div class="t" style="left:126px;top:1309px;transform:scaleX(1.04);transform-origin:0 0">60710</div>
<div class="t" style="left:245px;top:1309px;transform:scaleX(0.9716);transform-origin:0 0">Accounting Fees</div>
<div class="t n" style="right:624px;top:1308px">4,152</div>
<div class="t n" style="right:420px;top:1308px">4,359</div>
<div class="t n" style="right:216px;top:1308px">4,577</div>
<div class="t n" style="right:12px;top:1308px">4,806</div>
<div class="rn" style="top:1364px">24</div>
<div class="t" style="left:126px;top:1365px;transform:scaleX(1.04);transform-origin:0 0">60730</div>
<div class="t" style="left:245px;top:1365px;transform:scaleX(0.9198);transform-origin:0 0">Legal Fees</div>
<div class="t n" style="right:624px;top:1364px">7,021</div>
<div class="t n" style="right:420px;top:1364px">7,372</div>
<div class="t n" style="right:216px;top:1364px">7,741</div>
<div class="t n" style="right:12px;top:1364px">8,128</div>
<div class="rn" style="top:1420px">25</div>
<div class="t b" style="left:106px;top:1421px;transform:scaleX(0.97);transform-origin:0 0">Total</div>
<div class="t b" style="left:199px;top:1421px;transform:scaleX(1.04);transform-origin:0 0">60700</div>
<div class="t b" style="left:318px;top:1421px;transform:scaleX(0.9445);transform-origin:0 0">Professional Services</div>
<div class="t b n" style="left:863px;top:1419px;font-size:42px">$</div>
<div class="t b n" style="right:624px;top:1420px">11,173</div>
<div class="t b n" style="left:1067px;top:1419px;font-size:42px">$</div>
<div class="t b n" style="right:420px;top:1420px">11,731</div>
<div class="t b n" style="left:1271px;top:1419px;font-size:42px">$</div>
<div class="t b n" style="right:216px;top:1420px">12,318</div>
<div class="t b n" style="left:1475px;top:1419px;font-size:42px">$</div>
<div class="t b n" style="right:12px;top:1420px">12,934</div>
<div class="rn" style="top:1476px">26</div>
<div class="t" style="left:106px;top:1477px;transform:scaleX(1.04);transform-origin:0 0">60740</div>
<div class="t" style="left:225px;top:1477px;transform:scaleX(0.9585);transform-origin:0 0">Recruiting Fees</div>
<div class="t n" style="right:624px;top:1476px">8,721</div>
<div class="t n" style="right:420px;top:1476px">9,157</div>
<div class="t n" style="right:216px;top:1476px">9,615</div>
<div class="t n" style="right:12px;top:1476px">10,095</div>
<div class="rn" style="top:1532px">27</div>
<div class="t" style="left:106px;top:1533px;transform:scaleX(1.04);transform-origin:0 0">60810</div>
<div class="t" style="left:225px;top:1533px;transform:scaleX(0.9252);transform-origin:0 0">Salary &amp; Wages</div>
<div class="t n" style="right:624px;top:1532px">48,199</div>
<div class="t n" style="right:420px;top:1532px">50,609</div>
<div class="t n" style="right:216px;top:1532px">53,139</div>
<div class="t n" style="right:12px;top:1532px">55,796</div>
</div></body></html>
